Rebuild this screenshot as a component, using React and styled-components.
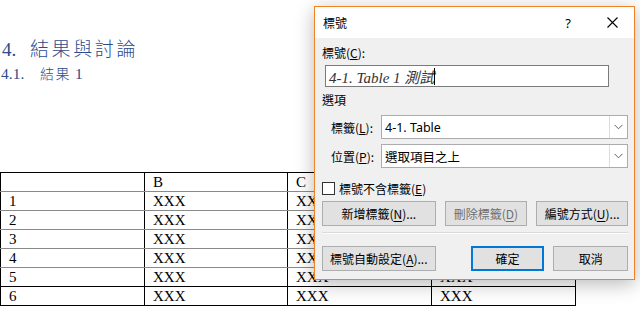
import React from "react";
import styled, { createGlobalStyle } from "styled-components";

const Global = createGlobalStyle`
  html, body { margin: 0; padding: 0; background: #ffffff; }
  body { width: 640px; height: 326px; overflow: hidden; position: relative; }
  #root { position: relative; width: 640px; height: 326px; }
`;

const Page = styled.div`
  position: relative;
  width: 640px;
  height: 326px;
  overflow: hidden;
  background: #fff;
`;

const Doc = styled.div`
  display: flex;
  flex-direction: column;
  padding-top: 36px;
  color: #2c4a8c;
`;

const H1 = styled.div`
  display: flex;
  align-items: baseline;
  padding-left: 2px;
  height: 24px;
  font-size: 19px;
  line-height: 24px;
  font-family: "Liberation Serif", "Noto Sans CJK TC", serif;
`;

const Num = styled.span`
  width: ${(p) => p.$w}px;
  font-family: "Liberation Serif", serif;
`;

const CJK = styled.span`
  font-family: "Noto Sans CJK TC", sans-serif;
  font-weight: 300;
  font-size: ${(p) => p.$fs}px;
  letter-spacing: ${(p) => p.$ls}px;
`;

const H2 = styled.div`
  display: flex;
  align-items: baseline;
  padding-left: 1px;
  margin-top: 4px;
  height: 18px;
  font-size: 15.5px;
  line-height: 18px;
  font-family: "Liberation Serif", serif;
`;

const Table = styled.table`
  margin-top: 90px;
  border-collapse: collapse;
  width: 575px;
  table-layout: fixed;
  font-family: "Liberation Serif", serif;
  font-size: 15px;
  color: #000;
  border: 1px solid #000;
`;

const Td = styled.td`
  height: 18px;
  padding: 0 0 0 8px;
  line-height: 18px;
  border-left: 1px solid #000;
  border-right: 1px solid #000;
  border-bottom: 1px solid ${(p) => (p.$dark ? "#000" : "#8a8a8a")};
  white-space: nowrap;
  overflow: hidden;
  vertical-align: middle;
`;

const Dialog = styled.div`
  position: absolute;
  left: 314px;
  top: 6px;
  width: 319px;
  height: 272px;
  border: 1px solid #f08224;
  background: #f0f0f0;
  box-shadow: 0 4px 18px rgba(0, 0, 0, 0.28);
  display: flex;
  flex-direction: column;
  font-family: "Noto Sans", "Noto Sans CJK TC", sans-serif;
  font-size: 12px;
  color: #000;
`;

const TitleBar = styled.div`
  height: 31px;
  background: #fff;
  display: flex;
  align-items: center;
  padding-left: 8px;
`;

const Title = styled.div`
  flex: 1;
  font-family: "Noto Sans CJK TC", sans-serif;
  font-size: 12px;
`;

const TitleBtn = styled.div`
  width: 44px;
  height: 31px;
  display: flex;
  align-items: center;
  justify-content: center;
  font-size: 13px;
  font-family: "Noto Sans", sans-serif;
`;

const Body = styled.div`
  flex: 1;
  display: flex;
  flex-direction: column;
  padding: 7px 6px 0 7px;
`;

const Label = styled.div`
  height: 16px;
  line-height: 16px;
  font-family: "Noto Sans CJK TC", sans-serif;
  margin-top: ${(p) => p.$mt || 0}px;
`;

const Input = styled.div`
  margin: 4px 0 0 3px;
  width: 279px;
  height: 20px;
  border: 1px solid #7a7a7a;
  background: #fff;
  display: flex;
  align-items: center;
  padding-left: 3px;
  font-family: "Liberation Serif", "Noto Sans CJK TC", serif;
  font-style: italic;
  font-size: 15px;
  color: #333;
`;

const Caret = styled.span`
  display: inline-block;
  width: 1px;
  height: 17px;
  background: #000;
`;

const FieldRow = styled.div`
  display: flex;
  align-items: center;
  height: 24px;
  margin-top: ${(p) => p.$mt}px;
`;

const FieldLabel = styled.div`
  width: 59px;
  padding-left: 9px;
  box-sizing: border-box;
  font-family: "Noto Sans CJK TC", sans-serif;
`;

const Select = styled.div`
  width: 247px;
  height: 24px;
  box-sizing: border-box;
  border: 1px solid #acacac;
  background: #fff;
  display: flex;
  align-items: center;
`;

const SelectText = styled.div`
  flex: 1;
  padding-left: 3px;
  font-size: 12.5px;
  color: #000;
`;

const SelectArrow = styled.div`
  width: 17px;
  height: 22px;
  border-left: 1px solid #dcdcdc;
  background: #fff;
  display: flex;
  align-items: center;
  justify-content: center;
`;

const CheckRow = styled.div`
  display: flex;
  align-items: center;
  gap: 4px;
  height: 14px;
  margin-top: 13px;
  font-family: "Noto Sans CJK TC", sans-serif;
`;

const Box = styled.div`
  width: 11px;
  height: 11px;
  border: 1px solid #333;
  background: #fff;
`;

const BtnRow = styled.div`
  display: flex;
  align-items: center;
  margin-top: ${(p) => p.$mt}px;
`;

const Button = styled.div`
  box-sizing: border-box;
  width: ${(p) => p.$w}px;
  height: 25px;
  margin-left: ${(p) => p.$ml || 0}px;
  background: #e1e1e1;
  border: ${(p) => (p.$default ? "2px solid #0078d7" : "1px solid #adadad")};
  display: flex;
  align-items: center;
  justify-content: center;
  font-family: "Noto Sans CJK TC", sans-serif;
  font-size: 12px;
  color: ${(p) => (p.$disabled ? "#6f6f6f" : "#000")};
  u { text-underline-offset: 2px; }
`;

const Sep = styled.div`
  height: 1px;
  margin-top: 6px;
  width: 306px;
  background: #dadada;
  border-bottom: 1px solid #fcfcfc;
`;

const Chevron = () => (
  <svg width="9" height="6" viewBox="0 0 9 6">
    <path d="M0.5 0.8 L4.5 4.8 L8.5 0.8" fill="none" stroke="#606060" strokeWidth="1" />
  </svg>
);

const CloseIcon = () => (
  <svg width="11" height="11" viewBox="0 0 11 11">
    <path d="M0.5 0.5 L10.5 10.5 M10.5 0.5 L0.5 10.5" stroke="#000" strokeWidth="1.1" />
  </svg>
);

const rows = [
  ["", "B", "C", ""],
  ["1", "XXX", "XXX", "XXX"],
  ["2", "XXX", "XXX", "XXX"],
  ["3", "XXX", "XXX", "XXX"],
  ["4", "XXX", "XXX", "XXX"],
  ["5", "XXX", "XXX", "XXX"],
  ["6", "XXX", "XXX", "XXX"],
];

export default function App() {
  return (
    <Page>
      <Global />
      <Doc>
        <H1>
          <Num $w={28}>4.</Num>
          <CJK $ls={2.6}>結果與討論</CJK>
        </H1>
        <H2>
          <Num $w={39}>4.1.</Num>
          <CJK $fs={14} $ls={1.5}>結果</CJK>
          <span>&nbsp;1</span>
        </H2>
        <Table>
          <colgroup>
            <col style={{ width: 144 }} />
            <col style={{ width: 143 }} />
            <col style={{ width: 144 }} />
            <col style={{ width: 144 }} />
          </colgroup>
          <tbody>
            {rows.map((r, i) => (
              <tr key={i}>
                {r.map((c, j) => (
                  <Td key={j} $dark={i >= 5}>
                    {c}
                  </Td>
                ))}
              </tr>
            ))}
          </tbody>
        </Table>
      </Doc>

      <Dialog>
        <TitleBar>
          <Title>標號</Title>
          <TitleBtn>?</TitleBtn>
          <TitleBtn>
            <CloseIcon />
          </TitleBtn>
        </TitleBar>
        <Body>
          <Label>
            標號(<u>C</u>):
          </Label>
          <Input>
            4-1. Table 1 測試
            <Caret />
          </Input>
          <Label $mt={5}>選項</Label>
          <FieldRow $mt={7}>
            <FieldLabel>
              標籤(<u>L</u>):
            </FieldLabel>
            <Select>
              <SelectText>4-1. Table</SelectText>
              <SelectArrow>
                <Chevron />
              </SelectArrow>
            </Select>
          </FieldRow>
          <FieldRow $mt={5}>
            <FieldLabel>
              位置(<u>P</u>):
            </FieldLabel>
            <Select>
              <SelectText>選取項目之上</SelectText>
              <SelectArrow>
                <Chevron />
              </SelectArrow>
            </Select>
          </FieldRow>
          <CheckRow>
            <Box />
            <span>
              標號不含標籤(<u>E</u>)
            </span>
          </CheckRow>
          <BtnRow $mt={6}>
            <Button $w={114}>
              新增標籤(<u>N</u>)...
            </Button>
            <Button $w={83} $ml={9} $disabled>
              刪除標籤(<u>D</u>)
            </Button>
            <Button $w={92} $ml={9}>
              編號方式(<u>U</u>)...
            </Button>
          </BtnRow>
          <Sep />
          <BtnRow $mt={12}>
            <Button $w={114}>
              標號自動設定(<u>A</u>)...
            </Button>
            <Button $w={74} $ml={35} $default>
              確定
            </Button>
            <Button $w={75} $ml={9}>
              取消
            </Button>
          </BtnRow>
        </Body>
      </Dialog>
    </Page>
  );
}
